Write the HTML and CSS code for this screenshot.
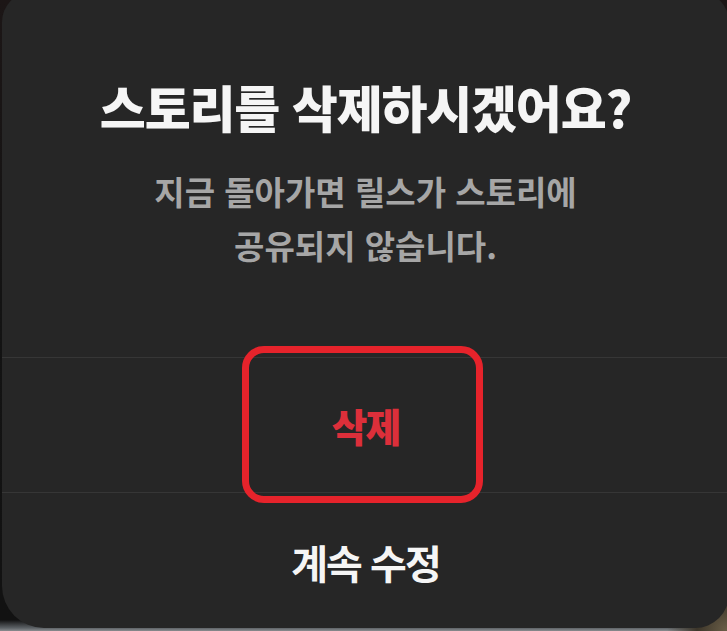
FILE: index.html
```html
<!DOCTYPE html>
<html lang="ko">
<head>
<meta charset="utf-8">
<title>스토리 삭제</title>
<link rel="stylesheet" href="styles.css">
</head>
<body>
<div class="scene">
  <div class="dialog">
    <div class="header">
      <h1 class="title">스토리를 삭제하시겠어요?</h1>
      <p class="message">지금 돌아가면 릴스가 스토리에<br>공유되지 않습니다.</p>
    </div>
    <button class="action action-danger" type="button">삭제<span class="highlight"></span></button>
    <button class="action action-last" type="button">계속 수정</button>
  </div>
</div>
</body>
</html>
```

FILE: styles.css
```css
html, body {
  margin: 0;
  padding: 0;
}

body {
  width: 727px;
  height: 631px;
  overflow: hidden;
  font-family: "Noto Sans CJK KR", "Noto Sans", sans-serif;
  background:
    radial-gradient(circle at 100% 100%, #6b5f48 0, #3d362a 30px, rgba(0,0,0,0) 60px),
    linear-gradient(to bottom, #1c1616 0, #131313 300px, #121212 620px, #5d6266 628px, #8a8d90 631px);
}

.scene {
  width: 727px;
  height: 631px;
}

.dialog {
  width: 727px;
  height: 636px;
  margin: -8px 0 0 2px;
  background: #262626;
  border-radius: 30px 30px 34px 42px;
  display: flex;
  flex-direction: column;
}

.header {
  padding: 86px 0 85px;
  text-align: center;
}

.title {
  margin: 0;
  height: 57px;
  font-size: 50px;
  line-height: 57px;
  font-weight: 900;
  letter-spacing: -1.2px;
  color: #f5f5f5;
}

.message {
  margin: 29px 0 0;
  height: 108px;
  font-size: 33px;
  line-height: 54px;
  font-weight: 700;
  letter-spacing: 0;
  color: #a6a6a6;
}

.action {
  position: relative;
  display: flex;
  align-items: center;
  justify-content: center;
  width: 100%;
  height: 135px;
  box-sizing: border-box;
  margin: 0;
  padding: 0;
  border: 0;
  border-top: 1px solid #363636;
  background: transparent;
  font-family: inherit;
  font-size: 40px;
  font-weight: 700;
  letter-spacing: -2px;
  color: #f5f5f5;
}

.action-last {
  height: 136px;
  padding-top: 2px;
}

.action-danger {
  font-size: 39px;
  color: #dc2f3a;
  font-weight: 900;
}

.highlight {
  position: absolute;
  left: 240px;
  top: -12px;
  width: 241px;
  height: 157px;
  box-sizing: border-box;
  border: 7px solid #e6232b;
  border-radius: 22px;
  z-index: 1;
  pointer-events: none;
}
```
